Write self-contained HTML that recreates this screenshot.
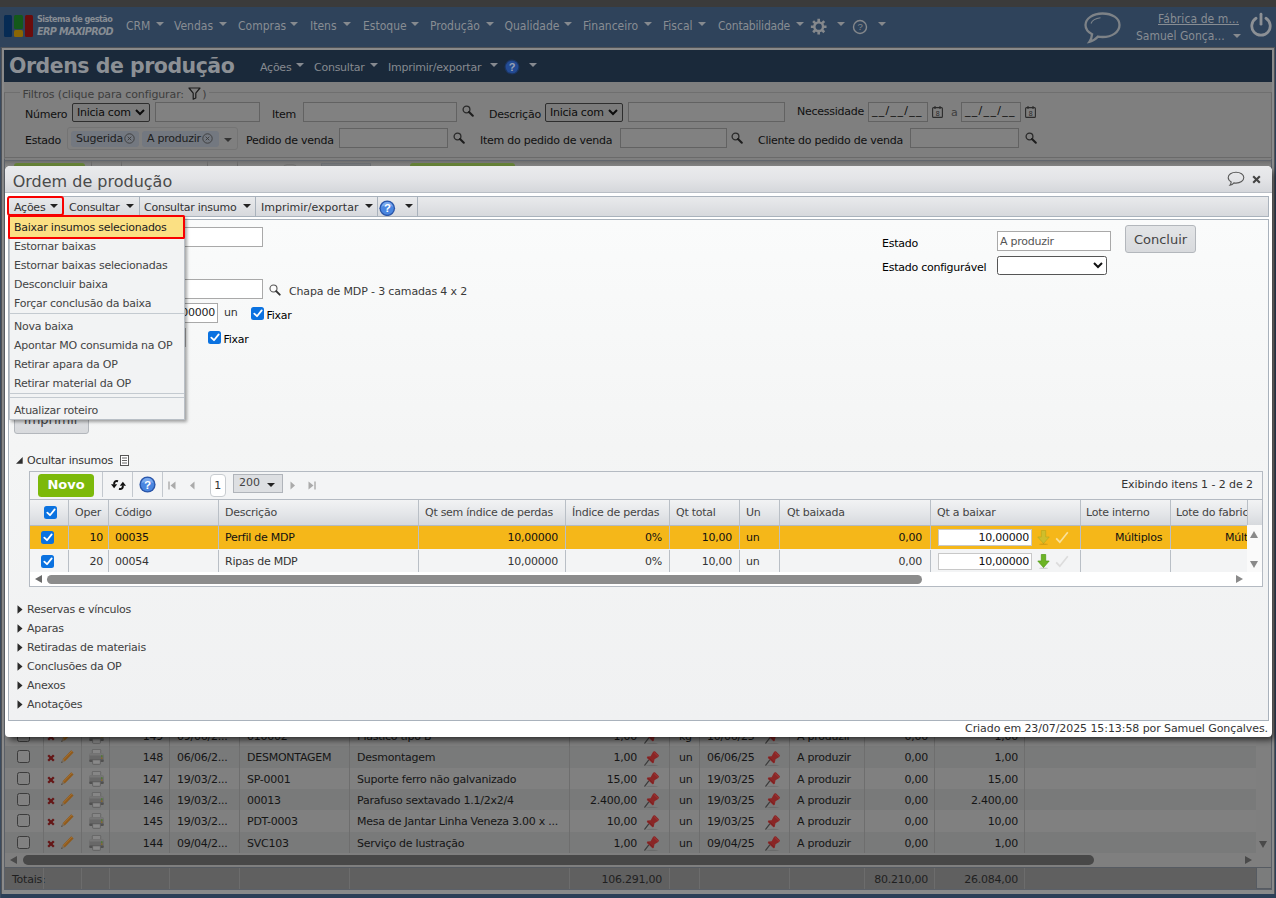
<!DOCTYPE html>
<html lang="pt-BR">
<head>
<meta charset="utf-8">
<title>Ordens de produção</title>
<style>
*{box-sizing:border-box;margin:0;padding:0}
html,body{width:1276px;height:898px;overflow:hidden}
body{position:relative;background:#7f7f7f;font-family:"DejaVu Sans","Liberation Sans",sans-serif;font-size:11px;color:#1a1a1a;letter-spacing:-0.250px}
.a{position:absolute;white-space:nowrap}
.t{position:absolute;white-space:nowrap;line-height:14px;height:14px}
.r{text-align:right}
/* ---------- dimmed page behind ---------- */
#strip{left:0;top:0;width:1276px;height:7px;background:#3b3b3b}
#nav{left:0;top:7px;width:1276px;height:40px;background:#2f435b}
#nav .t{font-family:"DejaVu Sans Condensed","Liberation Sans",sans-serif;font-size:12px;color:#888d93;letter-spacing:0;top:12px}
.nar{position:absolute;width:0;height:0;border-left:4px solid transparent;border-right:4px solid transparent;border-top:5px solid #868a8f;top:16px}
#frame{left:0;top:47px;width:1276px;height:851px;background:#7f7f7f}
#tbar{left:4px;top:50px;width:1268px;height:32px;background:#1a293a}
#tbar .t{color:#868a90;top:10.500px}
.tar{position:absolute;width:0;height:0;border-left:4.500px solid transparent;border-right:4.500px solid transparent;border-top:5px solid #868a90;top:14px}

.nar{top:14.500px;border-top-width:4.500px;border-left-width:4.500px;border-right-width:4.500px}
.tar{top:13px;border-top-width:4.5px}
/* filters */
#filt{left:4px;top:92px;width:1268px;height:66px;border:1px solid #6a6a6a;border-top-color:#6f6f6f}
#leg{left:20px;top:86.500px;background:#7f7f7f;padding:0 3px 0 2.500px;color:#3d3d3d;height:15px;line-height:15px;font-size:11px;letter-spacing:-0.120px}
.fl{color:#101010}
.fi{position:absolute;height:19.500px;border:1px solid #626262;background:#818181}
.fs{position:absolute;height:19px;border:1px solid #2e2e2e;border-radius:2px;background:#7b7b7b;color:#0c0c0c;line-height:17px;padding-left:4px}
.chip{position:absolute;top:3px;height:16px;line-height:15px;background:#737880;border-radius:3px;color:#1d1d1d;padding-left:5px}

/* background grid */
#bg{left:4px;top:158px;width:1268px;height:732px;border:1px solid #5b6068;border-top-color:#7f7f7f;background:#7f7f7f;overflow:hidden}
.brow{position:absolute;left:0;width:1251px;height:21.330px}
.brow span,.bfoot span{position:absolute;top:5px;line-height:14px;color:#151515;white-space:nowrap}
.bsep{position:absolute;top:560px;width:1px;height:134px;background:#6e6e6e}
.bfoot{position:absolute;left:0;top:708px;width:1251px;height:22px;background:#606060;border-top:1px solid #565b62}
.bfoot span{color:#1f1f1f;top:4.500px}
.cb{position:absolute;left:12px;top:4px;width:13px;height:13px;border:1px solid #3c3c3c;border-radius:2.500px;background:#818181}

/* modal */
#modal{left:5px;top:166px;width:1267px;height:571px;background:#fff;border-radius:5px 5px 4px 4px;box-shadow:3px 4px 6px -1px rgba(0,0,0,.65);color:#333}
#mhead{left:0;top:0;width:1267px;height:26.500px;border-radius:5px 5px 0 0;background:linear-gradient(#eaebed,#e3e4e7 50%,#d5d7db);border-bottom:1px solid #b9bec5}
#mtool{left:3px;top:30px;width:1261px;height:21px;border:1px solid #a9b2bc;background:linear-gradient(#e9eaec,#d7d9dd)}
#mtool .t{top:3.500px;color:#333}
.mar{position:absolute;top:6.500px;width:0;height:0;border-left:4px solid transparent;border-right:4px solid transparent;border-top:4.500px solid #222}
.msep{position:absolute;top:0;width:1px;height:19px;background:#a9b2bc}
#mbody{left:3px;top:53px;width:1261px;height:502px;border:1px solid #a9b2bc;background:linear-gradient(#fafbfb,#f4f5f5 45%,#f0f1f2)}
.inp{position:absolute;height:19px;border:1px solid #a9a9a9;background:#fff}

.chk{position:absolute;width:13px;height:13px;border-radius:2.500px;background:#0b72e0}
.chk svg{position:absolute;left:1.500px;top:2px}
.btn{position:absolute;border:1px solid #b3b7bc;border-radius:3px;background:linear-gradient(#e3e5e7,#d8dadd);color:#444;font-size:13px;text-align:center;letter-spacing:0}
/* dropdown menu */
#menu{left:4px;top:50px;width:176px;height:204px;background:#f2f3f4;border:1px solid #b9bfc6;box-shadow:2px 2px 3px rgba(0,0,0,.35)}
#menu .t{left:4px;color:#444}
#menu hr{position:absolute;left:0;width:174px;height:1px;border:0;background:#c4cad0}

/* inner grid (coords relative to modal) */
#grid{left:24px;top:305px;width:1234px;height:116px;border:1px solid #b4bac2;background:#fff;overflow:hidden}
#gtool{left:0;top:0;width:1232px;height:27px;background:#f3f4f5}
#ghead{left:0;top:27px;width:1232px;height:27px;background:linear-gradient(#f2f3f4,#e4e6e9 55%,#d6d9dd);border-top:1px solid #b4bac2;border-bottom:1px solid #b4bac2}
#ghead .t{top:5.500px;color:#444}
.gr{position:absolute;left:0;width:1217px;height:24px}
.gr .t{top:4.500px}
.vs{position:absolute;top:0;width:1px;height:100%;background:#b9bfc6}
.ts{position:absolute;top:0;width:1px;height:25px;background:#c3c8ce}
</style>
</head>
<body>
<!-- ======= dimmed background page ======= -->
<div class="a" id="frame"></div>
<div class="a" id="strip"></div>
<div class="a" id="nav">
  <span class="t" style="left:126px">CRM</span><i class="nar" style="left:155.500px"></i>
  <span class="t" style="left:174px">Vendas</span><i class="nar" style="left:218.500px"></i>
  <span class="t" style="left:238px">Compras</span><i class="nar" style="left:290px"></i>
  <span class="t" style="left:310px">Itens</span><i class="nar" style="left:343px"></i>
  <span class="t" style="left:363px">Estoque</span><i class="nar" style="left:411px"></i>
  <span class="t" style="left:430px">Produção</span><i class="nar" style="left:486px"></i>
  <span class="t" style="left:504.500px">Qualidade</span><i class="nar" style="left:563.500px"></i>
  <span class="t" style="left:583px">Financeiro</span><i class="nar" style="left:644px"></i>
  <span class="t" style="left:663px">Fiscal</span><i class="nar" style="left:698px"></i>
  <span class="t" style="left:718px;letter-spacing:-0.200px">Contabilidade</span><i class="nar" style="left:796px"></i>
  <!-- logo -->
  <div class="a" style="left:4px;top:8px;width:8px;height:22px;background:#062b54;border-radius:1.5px"></div>
  <div class="a" style="left:14px;top:8px;width:9px;height:14px;background:#14591a;border-radius:1.5px"></div>
  <div class="a" style="left:14px;top:23px;width:9px;height:7px;background:#8a6604;border-radius:1.5px"></div>
  <div class="a" style="left:25px;top:8px;width:8px;height:22px;background:#6b0c0c;border-radius:1.5px"></div>
  <span class="t" style="left:37px;top:5px;font-size:9px;font-weight:700;letter-spacing:-0.55px">Sistema de gestão</span>
  <span class="t" style="left:37px;top:18px;font-size:10.800px;font-style:italic;font-weight:700;letter-spacing:-0.650px;color:#868c93">ERP MAXIPROD</span>
  <!-- gear -->
  <svg class="a" style="left:810.300px;top:11.300px" width="17.400" height="17.400" viewBox="0 0 20 20"><g fill="none" stroke="#85888c" stroke-width="3" stroke-linecap="butt"><path d="M10 1v4M10 15v4M1 10h4M15 10h4M3.600 3.600l2.900 2.900M13.500 13.500l2.900 2.900M3.600 16.400l2.900-2.900M13.500 6.500l2.900-2.900"/></g><circle cx="10" cy="10" r="5" fill="none" stroke="#85888c" stroke-width="2.800"/></svg>
  <i class="nar" style="left:837px;border-top-color:#85888c"></i>
  <!-- help -->
  <svg class="a" style="left:852px;top:12px" width="16" height="16" viewBox="0 0 16 16"><circle cx="8" cy="8" r="6.500" fill="none" stroke="#85888c" stroke-width="1.400"/><text x="8" y="11.300" text-anchor="middle" font-family="Liberation Sans, sans-serif" font-size="9.500" fill="#85888c">?</text></svg>
  <i class="nar" style="left:878px;border-top-color:#85888c"></i>
  <!-- chat bubble -->
  <svg class="a" style="left:1083px;top:3.500px" width="40" height="34" viewBox="0 0 40 34"><path d="M19.5 2.5C9.8 2.5 2.5 7.6 2.5 14c0 3.8 2.6 7.1 6.6 9.2-.2 2.8-1.3 5.6-2.7 7.6 3.6-.8 6.6-2.8 8.6-5.2 1.4.3 2.9.4 4.5.4 9.700 0 17-5.100 17-12S29.200 2.500 19.500 2.500z" fill="none" stroke="#7d8287" stroke-width="2.300"/><path d="M8 12.500c1.200-3.200 5-5.300 9.500-5.800" fill="none" stroke="#7d838a" stroke-width="1.100"/></svg>
  <span class="t" style="left:1158px;top:5px;text-decoration:underline;letter-spacing:0.080px">Fábrica de m...</span>
  <span class="t" style="left:1136px;top:22px">Samuel Gonça...</span><i class="nar" style="left:1233px;top:27px"></i>
  <!-- power -->
  <svg class="a" style="left:1249px;top:5px" width="24" height="25" viewBox="0 0 24 25"><path d="M7 6.300A9.200 9.200 0 1 0 17 6.300" fill="none" stroke="#8c9095" stroke-width="2.800" stroke-linecap="round"/><path d="M12 2.200v10" stroke="#8c9095" stroke-width="2.800" stroke-linecap="round"/></svg>
</div>
<div class="a" style="left:1px;top:47px;width:1274px;height:847px;border:1px solid #505358;border-bottom:0"></div><div class="a" style="left:2px;top:48px;width:1272px;height:846px;border:2px solid #8a8a8a;border-bottom-width:4px"></div>
<div class="a" id="tbar">
  <span class="t" style="left:5px;top:1px;height:30px;line-height:30px;font-size:20.500px;font-weight:700;color:#8c9095;letter-spacing:-0.480px">Ordens de produção</span>
  <span class="t" style="left:256px">Ações</span><i class="tar" style="left:292px"></i>
  <span class="t" style="left:310px">Consultar</span><i class="tar" style="left:366px"></i>
  <span class="t" style="left:384px">Imprimir/exportar</span><i class="tar" style="left:486px"></i>
  <svg class="a" style="left:499.500px;top:9px" width="16" height="16" viewBox="0 0 16 16"><circle cx="8" cy="8" r="7.500" fill="#1c3560"/><circle cx="8" cy="8" r="6.300" fill="#234b94"/><text x="8" y="12" text-anchor="middle" font-family="Liberation Sans, sans-serif" font-weight="700" font-size="11" fill="#9aa3b5">?</text></svg>
  <i class="tar" style="left:525px"></i>
</div>
<div class="a" id="filt"></div>
<div class="a" id="leg">Filtros (clique para configurar: <svg style="vertical-align:-2px;margin:0 1px" width="13" height="13" viewBox="0 0 13 13"><path d="M1 1h11L7.800 6.200V11L5.200 12.200V6.200z" fill="none" stroke="#1c1c1c" stroke-width="1.200" stroke-linejoin="round"/></svg>)</div>
<span class="t fl" style="left:25px;top:108px">Número</span>
<div class="fs" style="left:72px;top:103px;width:78px">Inicia com<svg class="a" style="right:4px;top:5px" width="10" height="7" viewBox="0 0 10 7"><path d="M1 1l4 4 4-4" fill="none" stroke="#0c0c0c" stroke-width="2"/></svg></div>
<div class="fi" style="left:155px;top:102.200px;width:105px"></div>
<span class="t fl" style="left:272px;top:108px">Item</span>
<div class="fi" style="left:303px;top:102.200px;width:154px"></div><svg class="a" style="left:462px;top:105px" width="12" height="12" viewBox="0 0 12 12"><circle cx="4.500" cy="4.500" r="3.400" fill="none" stroke="#2a2a2a" stroke-width="1.300"/><path d="M7 7l3.800 3.800" stroke="#1d1d1d" stroke-width="2" stroke-linecap="round"/></svg>
<span class="t fl" style="left:489px;top:108px">Descrição</span>
<div class="fs" style="left:545px;top:103px;width:78px">Inicia com<svg class="a" style="right:4px;top:5px" width="10" height="7" viewBox="0 0 10 7"><path d="M1 1l4 4 4-4" fill="none" stroke="#0c0c0c" stroke-width="2"/></svg></div>
<div class="fi" style="left:628px;top:102.200px;width:157px"></div>
<span class="t fl" style="left:797px;top:104.500px">Necessidade</span>
<div class="fi" style="left:868px;top:102.200px;width:60px;line-height:16px;padding-left:3px;color:#0c0c0c;letter-spacing:1.300px">__/__/__</div><svg class="a" style="left:932px;top:106px" width="11" height="12" viewBox="0 0 11 12"><rect x="0.600" y="1.600" width="9.800" height="9.800" rx="1" fill="none" stroke="#2c2c2c" stroke-width="1.100"/><path d="M3 0v3M8 0v3" stroke="#2c2c2c" stroke-width="1.100"/><text x="5.500" y="10" text-anchor="middle" font-size="7" font-family="Liberation Sans, sans-serif" fill="#2c2c2c">8</text></svg>
<span class="t" style="left:951px;top:105.500px;color:#3d3d3d">a</span>
<div class="fi" style="left:961px;top:102.200px;width:60px;line-height:16px;padding-left:3px;color:#0c0c0c;letter-spacing:1.300px">__/__/__</div><svg class="a" style="left:1025px;top:106px" width="11" height="12" viewBox="0 0 11 12"><rect x="0.600" y="1.600" width="9.800" height="9.800" rx="1" fill="none" stroke="#2c2c2c" stroke-width="1.100"/><path d="M3 0v3M8 0v3" stroke="#2c2c2c" stroke-width="1.100"/><text x="5.500" y="10" text-anchor="middle" font-size="7" font-family="Liberation Sans, sans-serif" fill="#2c2c2c">8</text></svg>
<span class="t fl" style="left:25px;top:134px">Estado</span>
<div class="a" style="left:67px;top:127px;width:171px;height:23px;border:1px solid #747474;border-radius:3px">
  <div class="chip" style="left:3px;width:68px">Sugerida<svg style="vertical-align:-2px;margin-left:1px" width="11" height="11" viewBox="0 0 11 11"><circle cx="5.500" cy="5.500" r="4.700" fill="none" stroke="#3a3a3a" stroke-width="0.900"/><path d="M3.700 3.700l3.600 3.600M7.300 3.700l-3.600 3.600" stroke="#3a3a3a" stroke-width="0.900"/></svg></div>
  <div class="chip" style="left:74px;width:77px">A produzir<svg style="vertical-align:-2px;margin-left:1px" width="11" height="11" viewBox="0 0 11 11"><circle cx="5.500" cy="5.500" r="4.700" fill="none" stroke="#3a3a3a" stroke-width="0.900"/><path d="M3.700 3.700l3.600 3.600M7.300 3.700l-3.600 3.600" stroke="#3a3a3a" stroke-width="0.900"/></svg></div>
  <i class="a" style="left:156px;top:10px;width:0;height:0;border-left:4px solid transparent;border-right:4px solid transparent;border-top:4px solid #333"></i>
</div>
<span class="t fl" style="left:246px;top:134px">Pedido de venda</span>
<div class="fi" style="left:339px;top:128px;width:109px"></div><svg class="a" style="left:453px;top:132px" width="12" height="12" viewBox="0 0 12 12"><circle cx="4.500" cy="4.500" r="3.400" fill="none" stroke="#2a2a2a" stroke-width="1.300"/><path d="M7 7l3.800 3.800" stroke="#1d1d1d" stroke-width="2" stroke-linecap="round"/></svg>
<span class="t fl" style="left:480px;top:134px">Item do pedido de venda</span>
<div class="fi" style="left:620px;top:128px;width:107px"></div><svg class="a" style="left:731px;top:132px" width="12" height="12" viewBox="0 0 12 12"><circle cx="4.500" cy="4.500" r="3.400" fill="none" stroke="#2a2a2a" stroke-width="1.300"/><path d="M7 7l3.800 3.800" stroke="#1d1d1d" stroke-width="2" stroke-linecap="round"/></svg>
<span class="t fl" style="left:758px;top:134px">Cliente do pedido de venda</span>
<div class="fi" style="left:909.500px;top:128px;width:109px"></div><svg class="a" style="left:1025px;top:132px" width="12" height="12" viewBox="0 0 12 12"><circle cx="4.500" cy="4.500" r="3.400" fill="none" stroke="#2a2a2a" stroke-width="1.300"/><path d="M7 7l3.800 3.800" stroke="#1d1d1d" stroke-width="2" stroke-linecap="round"/></svg>
<div class="a" id="bg">
<div class="a" style="left:0;top:1.500px;width:1266px;height:8px;background:linear-gradient(#6e6e6e,#8c8c8c 6px,#8c8c8c)"></div><i class="a" style="left:0;top:0.500px;width:1266px;height:1px;background:#62666d"></i><i class="a" style="left:86px;top:2px;width:1px;height:10px;background:#6c6c6c"></i><i class="a" style="left:116px;top:2px;width:1px;height:10px;background:#6c6c6c"></i><i class="a" style="left:202px;top:2px;width:1px;height:10px;background:#6c6c6c"></i><i class="a" style="left:232px;top:2px;width:1px;height:10px;background:#6c6c6c"></i><i class="a" style="left:278px;top:4.500px;width:14px;height:20px;border:1px solid #737373;border-radius:4px;background:#808080"></i><i class="a" style="left:316px;top:4px;width:50px;height:19px;border:1px solid #6c6f73;background:#76787b"></i>
<div class="a" style="left:9px;top:4px;width:71px;height:20px;background:#668238;border-radius:3px"></div>
<div class="a" style="left:405px;top:4px;width:105px;height:20px;background:#668238;border-radius:3px"></div>
<div class="brow" style="top:565.9699999999999px;background:#808080"><i class="cb"></i><svg style="position:absolute;left:42px;top:8px" width="8" height="8" viewBox="0 0 8 8"><path d="M1.200 1.200l5.600 5.600M6.800 1.200l-5.600 5.600" stroke="#641616" stroke-width="2.300"/></svg><svg style="position:absolute;left:55px;top:3px" width="15" height="15" viewBox="0 0 15 15"><path d="M2.600 10.200L11.300 1.200l2.300 2.300L4.800 12.400z" fill="#8f5a1c"/><path d="M3.400 10.900L12 2" stroke="#a87432" stroke-width="0.800"/><path d="M2.600 10.200l2.200 2.200L1.300 13.700z" fill="#7a6a55"/><path d="M1.300 13.700l.500-1.300.800.800z" fill="#1c1c1c"/></svg><svg style="position:absolute;left:83.500px;top:3px" width="15" height="16" viewBox="0 0 15 16"><rect x="3.300" y="0.400" width="8.400" height="5.500" rx="0.800" fill="#868686" stroke="#5f5f5f" stroke-width="0.800"/><rect x="0.300" y="4.300" width="14.400" height="8.700" rx="1.600" fill="#686868"/><rect x="0.300" y="4.300" width="14.400" height="2.200" rx="1" fill="#767676"/><rect x="0.300" y="10.500" width="14.400" height="2.500" rx="1" fill="#515151"/><rect x="3.600" y="10.800" width="7.800" height="4.500" rx="0.800" fill="#898989" stroke="#5a5a5a" stroke-width="0.800"/><rect x="12" y="6.300" width="1.500" height="1.500" fill="#4e7d2c"/><rect x="12" y="8.500" width="1.500" height="1.300" fill="#8a6a1c"/></svg>
<span class="r" style="right:1093px">149</span><span style="left:172px">09/06/2...</span><span style="left:242px">010002</span><span style="left:352px">Plástico tipo B</span><span class="r" style="right:619px">1,00</span><svg style="position:absolute;left:639.200px;top:4.400px" width="16" height="16" viewBox="0 0 16 16"><ellipse cx="8" cy="14.300" rx="6.500" ry="0.600" fill="#000" opacity=".12"/><path d="M4.600 9.200L0.800 14.200" stroke="#3c3c3c" stroke-width="1.200" stroke-linecap="round"/><path d="M9.100 0.800Q10 0 10.900 0.300L14.900 4.300Q15 5.200 14.200 5.900L10.500 8.300L9.800 11.800Q9.300 12.400 8.500 12.200L2.900 6.900Q2.800 6 3.400 5.500L6.600 5.300z" fill="#8a2626"/><path d="M9.800 1.300L14 5.300" stroke="#a03a3a" stroke-width="0.900"/><path d="M4 6.300l5 4.800" stroke="#762020" stroke-width="0.900"/></svg><span style="left:674px">kg</span><span style="left:702px">10/06/25</span><svg style="position:absolute;left:759.500px;top:4.400px" width="16" height="16" viewBox="0 0 16 16"><ellipse cx="8" cy="14.300" rx="6.500" ry="0.600" fill="#000" opacity=".12"/><path d="M4.600 9.200L0.800 14.200" stroke="#3c3c3c" stroke-width="1.200" stroke-linecap="round"/><path d="M9.100 0.800Q10 0 10.900 0.300L14.900 4.300Q15 5.200 14.200 5.900L10.500 8.300L9.800 11.800Q9.300 12.400 8.500 12.200L2.900 6.900Q2.800 6 3.400 5.500L6.600 5.300z" fill="#8a2626"/><path d="M9.800 1.300L14 5.300" stroke="#a03a3a" stroke-width="0.900"/><path d="M4 6.300l5 4.800" stroke="#762020" stroke-width="0.900"/></svg><span style="left:792px">A produzir</span><span class="r" style="right:328px">0,00</span><span class="r" style="right:238px">1,00</span></div>
<div class="brow" style="top:587.3px;background:#797a7a"><i class="cb"></i><svg style="position:absolute;left:42px;top:8px" width="8" height="8" viewBox="0 0 8 8"><path d="M1.200 1.200l5.600 5.600M6.800 1.200l-5.600 5.600" stroke="#641616" stroke-width="2.300"/></svg><svg style="position:absolute;left:55px;top:3px" width="15" height="15" viewBox="0 0 15 15"><path d="M2.600 10.200L11.300 1.200l2.300 2.300L4.800 12.400z" fill="#8f5a1c"/><path d="M3.400 10.900L12 2" stroke="#a87432" stroke-width="0.800"/><path d="M2.600 10.200l2.200 2.200L1.300 13.700z" fill="#7a6a55"/><path d="M1.300 13.700l.500-1.300.800.800z" fill="#1c1c1c"/></svg><svg style="position:absolute;left:83.500px;top:3px" width="15" height="16" viewBox="0 0 15 16"><rect x="3.300" y="0.400" width="8.400" height="5.500" rx="0.800" fill="#868686" stroke="#5f5f5f" stroke-width="0.800"/><rect x="0.300" y="4.300" width="14.400" height="8.700" rx="1.600" fill="#686868"/><rect x="0.300" y="4.300" width="14.400" height="2.200" rx="1" fill="#767676"/><rect x="0.300" y="10.500" width="14.400" height="2.500" rx="1" fill="#515151"/><rect x="3.600" y="10.800" width="7.800" height="4.500" rx="0.800" fill="#898989" stroke="#5a5a5a" stroke-width="0.800"/><rect x="12" y="6.300" width="1.500" height="1.500" fill="#4e7d2c"/><rect x="12" y="8.500" width="1.500" height="1.300" fill="#8a6a1c"/></svg>
<span class="r" style="right:1093px">148</span><span style="left:172px">06/06/2...</span><span style="left:242px">DESMONTAGEM</span><span style="left:352px">Desmontagem</span><span class="r" style="right:619px">1,00</span><svg style="position:absolute;left:639.200px;top:4.400px" width="16" height="16" viewBox="0 0 16 16"><ellipse cx="8" cy="14.300" rx="6.500" ry="0.600" fill="#000" opacity=".12"/><path d="M4.600 9.200L0.800 14.200" stroke="#3c3c3c" stroke-width="1.200" stroke-linecap="round"/><path d="M9.100 0.800Q10 0 10.900 0.300L14.900 4.300Q15 5.200 14.200 5.900L10.500 8.300L9.800 11.800Q9.300 12.400 8.500 12.200L2.900 6.900Q2.800 6 3.400 5.500L6.600 5.300z" fill="#8a2626"/><path d="M9.800 1.300L14 5.300" stroke="#a03a3a" stroke-width="0.900"/><path d="M4 6.300l5 4.800" stroke="#762020" stroke-width="0.900"/></svg><span style="left:674px">un</span><span style="left:702px">06/06/25</span><svg style="position:absolute;left:759.500px;top:4.400px" width="16" height="16" viewBox="0 0 16 16"><ellipse cx="8" cy="14.300" rx="6.500" ry="0.600" fill="#000" opacity=".12"/><path d="M4.600 9.200L0.800 14.200" stroke="#3c3c3c" stroke-width="1.200" stroke-linecap="round"/><path d="M9.100 0.800Q10 0 10.900 0.300L14.900 4.300Q15 5.200 14.200 5.900L10.500 8.300L9.800 11.800Q9.300 12.400 8.500 12.200L2.900 6.900Q2.800 6 3.400 5.500L6.600 5.300z" fill="#8a2626"/><path d="M9.800 1.300L14 5.300" stroke="#a03a3a" stroke-width="0.900"/><path d="M4 6.300l5 4.800" stroke="#762020" stroke-width="0.900"/></svg><span style="left:792px">A produzir</span><span class="r" style="right:328px">0,00</span><span class="r" style="right:238px">1,00</span></div>
<div class="brow" style="top:608.63px;background:#808080"><i class="cb"></i><svg style="position:absolute;left:42px;top:8px" width="8" height="8" viewBox="0 0 8 8"><path d="M1.200 1.200l5.600 5.600M6.800 1.200l-5.600 5.600" stroke="#641616" stroke-width="2.300"/></svg><svg style="position:absolute;left:55px;top:3px" width="15" height="15" viewBox="0 0 15 15"><path d="M2.600 10.200L11.300 1.200l2.300 2.300L4.800 12.400z" fill="#8f5a1c"/><path d="M3.400 10.900L12 2" stroke="#a87432" stroke-width="0.800"/><path d="M2.600 10.200l2.200 2.200L1.300 13.700z" fill="#7a6a55"/><path d="M1.300 13.700l.500-1.300.800.800z" fill="#1c1c1c"/></svg><svg style="position:absolute;left:83.500px;top:3px" width="15" height="16" viewBox="0 0 15 16"><rect x="3.300" y="0.400" width="8.400" height="5.500" rx="0.800" fill="#868686" stroke="#5f5f5f" stroke-width="0.800"/><rect x="0.300" y="4.300" width="14.400" height="8.700" rx="1.600" fill="#686868"/><rect x="0.300" y="4.300" width="14.400" height="2.200" rx="1" fill="#767676"/><rect x="0.300" y="10.500" width="14.400" height="2.500" rx="1" fill="#515151"/><rect x="3.600" y="10.800" width="7.800" height="4.500" rx="0.800" fill="#898989" stroke="#5a5a5a" stroke-width="0.800"/><rect x="12" y="6.300" width="1.500" height="1.500" fill="#4e7d2c"/><rect x="12" y="8.500" width="1.500" height="1.300" fill="#8a6a1c"/></svg>
<span class="r" style="right:1093px">147</span><span style="left:172px">19/03/2...</span><span style="left:242px">SP-0001</span><span style="left:352px">Suporte ferro não galvanizado</span><span class="r" style="right:619px">15,00</span><svg style="position:absolute;left:639.200px;top:4.400px" width="16" height="16" viewBox="0 0 16 16"><ellipse cx="8" cy="14.300" rx="6.500" ry="0.600" fill="#000" opacity=".12"/><path d="M4.600 9.200L0.800 14.200" stroke="#3c3c3c" stroke-width="1.200" stroke-linecap="round"/><path d="M9.100 0.800Q10 0 10.900 0.300L14.900 4.300Q15 5.200 14.200 5.900L10.500 8.300L9.800 11.800Q9.300 12.400 8.500 12.200L2.900 6.900Q2.800 6 3.400 5.500L6.600 5.300z" fill="#8a2626"/><path d="M9.800 1.300L14 5.300" stroke="#a03a3a" stroke-width="0.900"/><path d="M4 6.300l5 4.800" stroke="#762020" stroke-width="0.900"/></svg><span style="left:674px">un</span><span style="left:702px">19/03/25</span><svg style="position:absolute;left:759.500px;top:4.400px" width="16" height="16" viewBox="0 0 16 16"><ellipse cx="8" cy="14.300" rx="6.500" ry="0.600" fill="#000" opacity=".12"/><path d="M4.600 9.200L0.800 14.200" stroke="#3c3c3c" stroke-width="1.200" stroke-linecap="round"/><path d="M9.100 0.800Q10 0 10.900 0.300L14.900 4.300Q15 5.200 14.200 5.900L10.500 8.300L9.800 11.800Q9.300 12.400 8.500 12.200L2.900 6.900Q2.800 6 3.400 5.500L6.600 5.300z" fill="#8a2626"/><path d="M9.800 1.300L14 5.300" stroke="#a03a3a" stroke-width="0.900"/><path d="M4 6.300l5 4.800" stroke="#762020" stroke-width="0.900"/></svg><span style="left:792px">A produzir</span><span class="r" style="right:328px">0,00</span><span class="r" style="right:238px">15,00</span></div>
<div class="brow" style="top:629.96px;background:#797a7a"><i class="cb"></i><svg style="position:absolute;left:42px;top:8px" width="8" height="8" viewBox="0 0 8 8"><path d="M1.200 1.200l5.600 5.600M6.800 1.200l-5.600 5.600" stroke="#641616" stroke-width="2.300"/></svg><svg style="position:absolute;left:55px;top:3px" width="15" height="15" viewBox="0 0 15 15"><path d="M2.600 10.200L11.300 1.200l2.300 2.300L4.800 12.400z" fill="#8f5a1c"/><path d="M3.400 10.900L12 2" stroke="#a87432" stroke-width="0.800"/><path d="M2.600 10.200l2.200 2.200L1.300 13.700z" fill="#7a6a55"/><path d="M1.300 13.700l.500-1.300.800.800z" fill="#1c1c1c"/></svg><svg style="position:absolute;left:83.500px;top:3px" width="15" height="16" viewBox="0 0 15 16"><rect x="3.300" y="0.400" width="8.400" height="5.500" rx="0.800" fill="#868686" stroke="#5f5f5f" stroke-width="0.800"/><rect x="0.300" y="4.300" width="14.400" height="8.700" rx="1.600" fill="#686868"/><rect x="0.300" y="4.300" width="14.400" height="2.200" rx="1" fill="#767676"/><rect x="0.300" y="10.500" width="14.400" height="2.500" rx="1" fill="#515151"/><rect x="3.600" y="10.800" width="7.800" height="4.500" rx="0.800" fill="#898989" stroke="#5a5a5a" stroke-width="0.800"/><rect x="12" y="6.300" width="1.500" height="1.500" fill="#4e7d2c"/><rect x="12" y="8.500" width="1.500" height="1.300" fill="#8a6a1c"/></svg>
<span class="r" style="right:1093px">146</span><span style="left:172px">19/03/2...</span><span style="left:242px">00013</span><span style="left:352px">Parafuso sextavado 1.1/2x2/4</span><span class="r" style="right:619px">2.400,00</span><svg style="position:absolute;left:639.200px;top:4.400px" width="16" height="16" viewBox="0 0 16 16"><ellipse cx="8" cy="14.300" rx="6.500" ry="0.600" fill="#000" opacity=".12"/><path d="M4.600 9.200L0.800 14.200" stroke="#3c3c3c" stroke-width="1.200" stroke-linecap="round"/><path d="M9.100 0.800Q10 0 10.900 0.300L14.900 4.300Q15 5.200 14.200 5.900L10.500 8.300L9.800 11.800Q9.300 12.400 8.500 12.200L2.900 6.900Q2.800 6 3.400 5.500L6.600 5.300z" fill="#8a2626"/><path d="M9.800 1.300L14 5.300" stroke="#a03a3a" stroke-width="0.900"/><path d="M4 6.300l5 4.800" stroke="#762020" stroke-width="0.900"/></svg><span style="left:674px">un</span><span style="left:702px">19/03/25</span><svg style="position:absolute;left:759.500px;top:4.400px" width="16" height="16" viewBox="0 0 16 16"><ellipse cx="8" cy="14.300" rx="6.500" ry="0.600" fill="#000" opacity=".12"/><path d="M4.600 9.200L0.800 14.200" stroke="#3c3c3c" stroke-width="1.200" stroke-linecap="round"/><path d="M9.100 0.800Q10 0 10.900 0.300L14.900 4.300Q15 5.200 14.200 5.900L10.500 8.300L9.800 11.800Q9.300 12.400 8.500 12.200L2.900 6.900Q2.800 6 3.400 5.500L6.600 5.300z" fill="#8a2626"/><path d="M9.800 1.300L14 5.300" stroke="#a03a3a" stroke-width="0.900"/><path d="M4 6.300l5 4.800" stroke="#762020" stroke-width="0.900"/></svg><span style="left:792px">A produzir</span><span class="r" style="right:328px">0,00</span><span class="r" style="right:238px">2.400,00</span></div>
<div class="brow" style="top:651.29px;background:#808080"><i class="cb"></i><svg style="position:absolute;left:42px;top:8px" width="8" height="8" viewBox="0 0 8 8"><path d="M1.200 1.200l5.600 5.600M6.800 1.200l-5.600 5.600" stroke="#641616" stroke-width="2.300"/></svg><svg style="position:absolute;left:55px;top:3px" width="15" height="15" viewBox="0 0 15 15"><path d="M2.600 10.200L11.300 1.200l2.300 2.300L4.800 12.400z" fill="#8f5a1c"/><path d="M3.400 10.900L12 2" stroke="#a87432" stroke-width="0.800"/><path d="M2.600 10.200l2.200 2.200L1.300 13.700z" fill="#7a6a55"/><path d="M1.300 13.700l.500-1.300.800.800z" fill="#1c1c1c"/></svg><svg style="position:absolute;left:83.500px;top:3px" width="15" height="16" viewBox="0 0 15 16"><rect x="3.300" y="0.400" width="8.400" height="5.500" rx="0.800" fill="#868686" stroke="#5f5f5f" stroke-width="0.800"/><rect x="0.300" y="4.300" width="14.400" height="8.700" rx="1.600" fill="#686868"/><rect x="0.300" y="4.300" width="14.400" height="2.200" rx="1" fill="#767676"/><rect x="0.300" y="10.500" width="14.400" height="2.500" rx="1" fill="#515151"/><rect x="3.600" y="10.800" width="7.800" height="4.500" rx="0.800" fill="#898989" stroke="#5a5a5a" stroke-width="0.800"/><rect x="12" y="6.300" width="1.500" height="1.500" fill="#4e7d2c"/><rect x="12" y="8.500" width="1.500" height="1.300" fill="#8a6a1c"/></svg>
<span class="r" style="right:1093px">145</span><span style="left:172px">19/03/2...</span><span style="left:242px">PDT-0003</span><span style="left:352px">Mesa de Jantar Linha Veneza 3.00 x ...</span><span class="r" style="right:619px">10,00</span><svg style="position:absolute;left:639.200px;top:4.400px" width="16" height="16" viewBox="0 0 16 16"><ellipse cx="8" cy="14.300" rx="6.500" ry="0.600" fill="#000" opacity=".12"/><path d="M4.600 9.200L0.800 14.200" stroke="#3c3c3c" stroke-width="1.200" stroke-linecap="round"/><path d="M9.100 0.800Q10 0 10.900 0.300L14.900 4.300Q15 5.200 14.200 5.900L10.500 8.300L9.800 11.800Q9.300 12.400 8.500 12.200L2.900 6.900Q2.800 6 3.400 5.500L6.600 5.300z" fill="#8a2626"/><path d="M9.800 1.300L14 5.300" stroke="#a03a3a" stroke-width="0.900"/><path d="M4 6.300l5 4.800" stroke="#762020" stroke-width="0.900"/></svg><span style="left:674px">un</span><span style="left:702px">19/03/25</span><svg style="position:absolute;left:759.500px;top:4.400px" width="16" height="16" viewBox="0 0 16 16"><ellipse cx="8" cy="14.300" rx="6.500" ry="0.600" fill="#000" opacity=".12"/><path d="M4.600 9.200L0.800 14.200" stroke="#3c3c3c" stroke-width="1.200" stroke-linecap="round"/><path d="M9.100 0.800Q10 0 10.900 0.300L14.900 4.300Q15 5.200 14.200 5.900L10.500 8.300L9.800 11.800Q9.300 12.400 8.500 12.200L2.900 6.900Q2.800 6 3.400 5.500L6.600 5.300z" fill="#8a2626"/><path d="M9.800 1.300L14 5.300" stroke="#a03a3a" stroke-width="0.900"/><path d="M4 6.300l5 4.800" stroke="#762020" stroke-width="0.900"/></svg><span style="left:792px">A produzir</span><span class="r" style="right:328px">0,00</span><span class="r" style="right:238px">10,00</span></div>
<div class="brow" style="top:672.62px;background:#797a7a"><i class="cb"></i><svg style="position:absolute;left:42px;top:8px" width="8" height="8" viewBox="0 0 8 8"><path d="M1.200 1.200l5.600 5.600M6.800 1.200l-5.600 5.600" stroke="#641616" stroke-width="2.300"/></svg><svg style="position:absolute;left:55px;top:3px" width="15" height="15" viewBox="0 0 15 15"><path d="M2.600 10.200L11.300 1.200l2.300 2.300L4.800 12.400z" fill="#8f5a1c"/><path d="M3.400 10.900L12 2" stroke="#a87432" stroke-width="0.800"/><path d="M2.600 10.200l2.200 2.200L1.300 13.700z" fill="#7a6a55"/><path d="M1.300 13.700l.500-1.300.800.800z" fill="#1c1c1c"/></svg><svg style="position:absolute;left:83.500px;top:3px" width="15" height="16" viewBox="0 0 15 16"><rect x="3.300" y="0.400" width="8.400" height="5.500" rx="0.800" fill="#868686" stroke="#5f5f5f" stroke-width="0.800"/><rect x="0.300" y="4.300" width="14.400" height="8.700" rx="1.600" fill="#686868"/><rect x="0.300" y="4.300" width="14.400" height="2.200" rx="1" fill="#767676"/><rect x="0.300" y="10.500" width="14.400" height="2.500" rx="1" fill="#515151"/><rect x="3.600" y="10.800" width="7.800" height="4.500" rx="0.800" fill="#898989" stroke="#5a5a5a" stroke-width="0.800"/><rect x="12" y="6.300" width="1.500" height="1.500" fill="#4e7d2c"/><rect x="12" y="8.500" width="1.500" height="1.300" fill="#8a6a1c"/></svg>
<span class="r" style="right:1093px">144</span><span style="left:172px">09/04/2...</span><span style="left:242px">SVC103</span><span style="left:352px">Serviço de lustração</span><span class="r" style="right:619px">1,00</span><svg style="position:absolute;left:639.200px;top:4.400px" width="16" height="16" viewBox="0 0 16 16"><ellipse cx="8" cy="14.300" rx="6.500" ry="0.600" fill="#000" opacity=".12"/><path d="M4.600 9.200L0.800 14.200" stroke="#3c3c3c" stroke-width="1.200" stroke-linecap="round"/><path d="M9.100 0.800Q10 0 10.900 0.300L14.900 4.300Q15 5.200 14.200 5.900L10.500 8.300L9.800 11.800Q9.300 12.400 8.500 12.200L2.900 6.900Q2.800 6 3.400 5.500L6.600 5.300z" fill="#8a2626"/><path d="M9.800 1.300L14 5.300" stroke="#a03a3a" stroke-width="0.900"/><path d="M4 6.300l5 4.800" stroke="#762020" stroke-width="0.900"/></svg><span style="left:674px">un</span><span style="left:702px">09/04/25</span><svg style="position:absolute;left:759.500px;top:4.400px" width="16" height="16" viewBox="0 0 16 16"><ellipse cx="8" cy="14.300" rx="6.500" ry="0.600" fill="#000" opacity=".12"/><path d="M4.600 9.200L0.800 14.200" stroke="#3c3c3c" stroke-width="1.200" stroke-linecap="round"/><path d="M9.100 0.800Q10 0 10.900 0.300L14.900 4.300Q15 5.200 14.200 5.900L10.500 8.300L9.800 11.800Q9.300 12.400 8.500 12.200L2.900 6.900Q2.800 6 3.400 5.500L6.600 5.300z" fill="#8a2626"/><path d="M9.800 1.300L14 5.300" stroke="#a03a3a" stroke-width="0.900"/><path d="M4 6.300l5 4.800" stroke="#762020" stroke-width="0.900"/></svg><span style="left:792px">A produzir</span><span class="r" style="right:328px">0,00</span><span class="r" style="right:238px">1,00</span></div>
<i class="bsep" style="left:38px"></i><i class="bsep" style="left:76px"></i><i class="bsep" style="left:104px"></i><i class="bsep" style="left:164px"></i><i class="bsep" style="left:234px"></i><i class="bsep" style="left:344px"></i><i class="bsep" style="left:564px"></i><i class="bsep" style="left:664px"></i><i class="bsep" style="left:694px"></i><i class="bsep" style="left:784px"></i><i class="bsep" style="left:859px"></i><i class="bsep" style="left:929px"></i><i class="bsep" style="left:1019px"></i>
<!-- h scrollbar -->
<div class="a" style="left:0;top:694px;width:1266px;height:15px;background:#7f7f7f"></div>
<i class="a" style="left:5px;top:697px;border-top:4.500px solid transparent;border-bottom:4.500px solid transparent;border-right:7px solid #4a4a4a"></i>
<div class="a" style="left:18px;top:696px;width:1071px;height:10px;border-radius:5px;background:#484848"></div>
<i class="a" style="left:1240px;top:697px;border-top:4.500px solid transparent;border-bottom:4.500px solid transparent;border-left:7px solid #4a4a4a"></i>
<i class="a" style="left:1254px;top:682px;border-left:4.500px solid transparent;border-right:4.500px solid transparent;border-top:7px solid #4a4a4a"></i>
<div class="bfoot"><span style="left:7px">Totais:</span><span class="r" style="right:594px">106.291,00</span><span class="r" style="right:328px">80.210,00</span><span class="r" style="right:238px">26.084,00</span>
<i style="position:absolute;top:0;left:38px;width:1px;height:22px;background:#6c6c6c"></i><i style="position:absolute;top:0;left:76px;width:1px;height:22px;background:#6c6c6c"></i><i style="position:absolute;top:0;left:104px;width:1px;height:22px;background:#6c6c6c"></i><i style="position:absolute;top:0;left:164px;width:1px;height:22px;background:#6c6c6c"></i><i style="position:absolute;top:0;left:234px;width:1px;height:22px;background:#6c6c6c"></i><i style="position:absolute;top:0;left:344px;width:1px;height:22px;background:#6c6c6c"></i><i style="position:absolute;top:0;left:564px;width:1px;height:22px;background:#6c6c6c"></i><i style="position:absolute;top:0;left:664px;width:1px;height:22px;background:#6c6c6c"></i><i style="position:absolute;top:0;left:694px;width:1px;height:22px;background:#6c6c6c"></i><i style="position:absolute;top:0;left:784px;width:1px;height:22px;background:#6c6c6c"></i><i style="position:absolute;top:0;left:859px;width:1px;height:22px;background:#6c6c6c"></i><i style="position:absolute;top:0;left:929px;width:1px;height:22px;background:#6c6c6c"></i><i style="position:absolute;top:0;left:1019px;width:1px;height:22px;background:#6c6c6c"></i>
</div>
<div class="a" style="left:1251px;top:708px;width:15px;height:22px;background:#7b7c7c;border:1px solid #565b62;border-right:0"></div>
</div>
<div class="a" style="left:0;top:894px;width:1276px;height:4px;background:#2c3f57"></div>
<div class="a" style="left:1275px;top:47px;width:1px;height:851px;background:#2c3f57"></div>
<div class="a" style="left:0;top:47px;width:1px;height:851px;background:#3a4a5e"></div>
<!-- ======= modal ======= -->
<div class="a" id="modal">
  <div class="a" id="mhead">
    <span class="t" style="left:7.700px;top:4.500px;height:22px;line-height:22px;font-size:16px;color:#4a4a4a;letter-spacing:0">Ordem de produção</span>
    <svg class="a" style="left:1222px;top:5px" width="18" height="16" viewBox="0 0 18 16"><path d="M9 1.200C4.600 1.200 1.200 3.600 1.200 6.600c0 1.800 1.200 3.300 3 4.300-.1 1.300-.6 2.500-1.300 3.400 1.700-.3 3.100-1.200 4-2.400.7.100 1.400.200 2.100.200 4.400 0 7.800-2.400 7.800-5.500S13.400 1.200 9 1.200z" fill="none" stroke="#5a5a5a" stroke-width="1.100"/></svg>
    <svg class="a" style="left:1247px;top:9px" width="9" height="9" viewBox="0 0 9 9"><path d="M1.200 1.200l6.600 6.600M7.800 1.200l-6.600 6.600" stroke="#444" stroke-width="2.100"/></svg>
  </div>
  <div class="a" id="mtool">
    <span class="t" style="left:5px">Ações</span><i class="mar" style="left:41px"></i>
    <span class="t" style="left:60px">Consultar</span><i class="mar" style="left:117px"></i><i class="msep" style="left:130px"></i>
    <span class="t" style="left:135px">Consultar insumo</span><i class="mar" style="left:234px"></i><i class="msep" style="left:246px"></i>
    <span class="t" style="left:252px;letter-spacing:0">Imprimir/exportar</span><i class="mar" style="left:356px"></i>
    <svg class="a" style="left:370px;top:2.500px" width="16.500" height="16.500" viewBox="0 0 16 16"><circle cx="8" cy="8" r="7.600" fill="#2a55a8"/><circle cx="8" cy="8" r="6.300" fill="#4a86e0"/><path d="M2.500 6.500a5.600 5.600 0 0 1 11 0a9 5 0 0 0-11 0z" fill="#8fb8f4" opacity=".7"/><text x="8" y="12" text-anchor="middle" font-family="Liberation Sans, sans-serif" font-weight="700" font-size="11" fill="#fff">?</text></svg>
    <i class="mar" style="left:395.500px"></i><i class="msep" style="left:408px"></i><i class="msep" style="left:368px"></i>
  </div>
  <div class="a" id="mbody"></div>
  <!-- form (coordinates relative to modal) -->
  <div class="inp" style="left:100px;top:61px;width:158px;height:20px"></div>
  <div class="inp" style="left:100px;top:113px;width:158px;height:20px"></div><svg class="a" style="left:264px;top:117.500px" width="12" height="12" viewBox="0 0 12 12"><circle cx="4.500" cy="4.500" r="3.500" fill="#fdfdfd" stroke="#555" stroke-width="1.100"/><path d="M7.200 7.200l3.500 3.500" stroke="#333" stroke-width="1.900" stroke-linecap="round"/></svg>
  <span class="t" style="left:284px;top:118.500px;color:#3a3a3a;letter-spacing:-0.150px">Chapa de MDP - 3 camadas 4 x 2</span>
  <div class="inp r" style="left:130px;top:137px;width:83px;height:20px;line-height:18px;padding-right:2px;color:#222">10,00000</div>
  <span class="t" style="left:219px;top:139.500px;color:#333">un</span>
  <i class="chk" style="left:246px;top:141px"><svg width="10" height="9" viewBox="0 0 10 9"><path d="M1.300 4.600l2.700 2.600L8.700 1.400" fill="none" stroke="#fff" stroke-width="1.800" stroke-linecap="round" stroke-linejoin="round"/></svg></i><span class="t" style="left:261.500px;top:143px;color:#000">Fixar</span>
  <div class="inp" style="left:100px;top:162px;width:81px"></div>
  <i class="chk" style="left:203px;top:165px"><svg width="10" height="9" viewBox="0 0 10 9"><path d="M1.300 4.600l2.700 2.600L8.700 1.400" fill="none" stroke="#fff" stroke-width="1.800" stroke-linecap="round" stroke-linejoin="round"/></svg></i><span class="t" style="left:218.500px;top:167px;color:#000">Fixar</span>
  <div class="btn" style="left:9px;top:239px;width:75px;height:29px;line-height:28px">Imprimir</div>
  <span class="t" style="left:877px;top:71px;color:#000">Estado</span>
  <div class="inp" style="left:992px;top:65px;width:114px;height:20px;line-height:19px;padding-left:2px;color:#555">A produzir</div>
  <div class="btn" style="left:1120px;top:59px;width:71px;height:28px;line-height:27px">Concluir</div>
  <span class="t" style="left:877px;top:95px;color:#000">Estado configurável</span>
  <div class="a" style="left:992px;top:89.500px;width:110px;height:19.500px;border:1px solid #555;border-radius:2.500px;background:#fff"><svg class="a" style="right:3px;top:5px" width="10" height="7" viewBox="0 0 10 7"><path d="M1 1l4 4 4-4" fill="none" stroke="#111" stroke-width="2"/></svg></div>
  <!-- Ocultar insumos -->
  <svg class="a" style="left:10.500px;top:291px" width="7" height="7" viewBox="0 0 7 7"><path d="M6.700 0v6.700H0z" fill="#2e2e2e"/></svg>
  <span class="t" style="left:22px;top:287.500px;color:#333">Ocultar insumos</span>
  <svg class="a" style="left:115px;top:289px" width="9" height="11" viewBox="0 0 9 11"><rect x="0.500" y="0.500" width="8" height="10" fill="#fff" stroke="#555"/><path d="M2 3h5M2 5.500h5M2 8h5" stroke="#555" stroke-width="0.900"/></svg>
  <div class="a" id="grid">
    <div class="a" id="gtool">
      <div class="a" style="left:8px;top:1.500px;width:56px;height:23px;border-radius:3.500px;background:#7cb90a;color:#fff;font-weight:700;font-size:13px;line-height:22px;text-align:center;letter-spacing:0">Novo</div>
      <i class="ts" style="left:72px"></i><i class="ts" style="left:102px"></i><i class="ts" style="left:132px"></i>
      <svg class="a" style="left:80.500px;top:7px" width="15" height="12" viewBox="0 0 15 12"><path d="M7 2.200C4.600 1.300 3 2.600 3.100 5.500" fill="none" stroke="#111" stroke-width="2"/><path d="M0 5.200h6.200L3.100 9.300z" fill="#111"/><path d="M8 9.800c2.400.900 4-.400 3.900-3.300" fill="none" stroke="#111" stroke-width="2"/><path d="M15 6.800H8.800l3.100-4.100z" fill="#111"/></svg>
      <svg class="a" style="left:108.500px;top:4px" width="17" height="17" viewBox="0 0 16 16"><circle cx="8" cy="8" r="7.600" fill="#2a55a8"/><circle cx="8" cy="8" r="6.300" fill="#4a86e0"/><path d="M2.500 6.500a5.600 5.600 0 0 1 11 0a9 5 0 0 0-11 0z" fill="#8fb8f4" opacity=".7"/><text x="8" y="12" text-anchor="middle" font-family="Liberation Sans, sans-serif" font-weight="700" font-size="11" fill="#fff">?</text></svg>
      <svg class="a" style="left:138px;top:8.500px" width="8" height="9" viewBox="0 0 8 9"><path d="M1 0.500v8" stroke="#aaa" stroke-width="1.400"/><path d="M7.500 0.500v8L2.500 4.500z" fill="#aaa"/></svg>
      <svg class="a" style="left:160px;top:8.500px" width="5" height="9" viewBox="0 0 5 9"><path d="M4.500 0.500v8L0 4.500z" fill="#aaa"/></svg>
      <div class="a" style="left:179.500px;top:2px;width:16px;height:23px;border:1px solid #c8ccd0;border-radius:4px;background:#fff;text-align:center;line-height:22px;color:#333">1</div>
      <div class="a" style="left:203px;top:2px;width:50px;height:19px;border:1px solid #b0b4ba;background:#dddfe2;line-height:16px;padding-left:5px;color:#444;letter-spacing:0">200<i class="a" style="left:33px;top:8px;border-left:4.500px solid transparent;border-right:4.500px solid transparent;border-top:4.500px solid #222"></i></div>
      <svg class="a" style="left:259.500px;top:8.500px" width="5" height="9" viewBox="0 0 5 9"><path d="M0.500 0.500v8L5 4.500z" fill="#aaa"/></svg>
      <svg class="a" style="left:278px;top:8.500px" width="8" height="9" viewBox="0 0 8 9"><path d="M7 0.500v8" stroke="#aaa" stroke-width="1.400"/><path d="M0.500 0.500v8L5.500 4.500z" fill="#aaa"/></svg>
      <span class="t r" style="right:9px;top:5.500px;color:#333;letter-spacing:-0.080px">Exibindo itens 1 - 2 de 2</span>
    </div>
    <div class="a" id="ghead"><i class="vs" style="left:38px"></i><i class="vs" style="left:78px"></i><i class="vs" style="left:188px"></i><i class="vs" style="left:388px"></i><i class="vs" style="left:535px"></i><i class="vs" style="left:639px"></i><i class="vs" style="left:709px"></i><i class="vs" style="left:749px"></i><i class="vs" style="left:899.500px"></i><i class="vs" style="left:1049.500px"></i><i class="vs" style="left:1139.500px"></i><i class="vs" style="left:1217px"></i>
      <i class="chk" style="left:14px;top:5.500px"><svg width="10" height="9" viewBox="0 0 10 9"><path d="M1.300 4.600l2.700 2.600L8.700 1.400" fill="none" stroke="#fff" stroke-width="1.800" stroke-linecap="round" stroke-linejoin="round"/></svg></i>
      <span class="t" style="left:45px">Oper</span><span class="t" style="left:85px">Código</span><span class="t" style="left:195px">Descrição</span><span class="t" style="left:395px;letter-spacing:-0.280px">Qt sem índice de perdas</span><span class="t" style="left:542px">Índice de perdas</span><span class="t" style="left:646px">Qt total</span><span class="t" style="left:716px">Un</span><span class="t" style="left:757px">Qt baixada</span><span class="t" style="left:907px">Qt a baixar</span><span class="t" style="left:1056px">Lote interno</span><span class="t" style="left:1146px;width:71px;overflow:hidden">Lote do fabricante</span>
    </div>
    <div class="gr" style="top:54px;height:23px;background:#f5b719;color:#111"><i class="vs" style="left:38px"></i><i class="vs" style="left:78px"></i><i class="vs" style="left:188px"></i><i class="vs" style="left:388px"></i><i class="vs" style="left:535px"></i><i class="vs" style="left:639px"></i><i class="vs" style="left:709px"></i><i class="vs" style="left:749px"></i><i class="vs" style="left:899.500px"></i><i class="vs" style="left:1049.500px"></i><i class="vs" style="left:1139.500px"></i>
<i class="chk" style="left:11px;top:5px"><svg width="10" height="9" viewBox="0 0 10 9"><path d="M1.300 4.600l2.700 2.600L8.700 1.400" fill="none" stroke="#fff" stroke-width="1.800" stroke-linecap="round" stroke-linejoin="round"/></svg></i>
<span class="t r" style="right:1144px">10</span><span class="t" style="left:85px">00035</span><span class="t" style="left:195px">Perfil de MDP</span>
<span class="t r" style="right:689px">10,00000</span><span class="t r" style="right:585px">0%</span><span class="t r" style="right:515px">10,00</span><span class="t" style="left:716px">un</span><span class="t r" style="right:325px">0,00</span>
<div class="a r" style="left:908px;top:2.500px;width:94px;height:17.500px;background:#fff;border:1px solid #c8c8c8;color:#111;line-height:16px;padding-right:2px">10,00000</div><svg class="a" style="left:1007px;top:4px;opacity:0.85" width="13" height="15" viewBox="0 0 13 15"><path d="M4.300 0.500h4.400v6.500h3.500L6.500 13.500.800 7h3.500z" fill="#c8c030" stroke="#b0a820" stroke-width="0.700"/><ellipse cx="6.500" cy="14.200" rx="4.500" ry="0.700" fill="#000" opacity=".15"/></svg><svg class="a" style="left:1025px;top:5px" width="14" height="13" viewBox="0 0 14 13"><path d="M1.200 7.300l3.600 3.900L12.800 1.200" fill="none" stroke="#f9e19a" stroke-width="1.700"/></svg>
<span class="t" style="left:1085px">Múltiplos</span><span class="t" style="left:1195px">Múlt</span></div>
    <div class="gr" style="top:78px;height:22px;box-shadow:0 -1px 0 #f3f4f5;background:#f3f4f5;color:#333"><i class="vs" style="left:38px"></i><i class="vs" style="left:78px"></i><i class="vs" style="left:188px"></i><i class="vs" style="left:388px"></i><i class="vs" style="left:535px"></i><i class="vs" style="left:639px"></i><i class="vs" style="left:709px"></i><i class="vs" style="left:749px"></i><i class="vs" style="left:899.500px"></i><i class="vs" style="left:1049.500px"></i><i class="vs" style="left:1139.500px"></i>
<i class="chk" style="left:11px;top:5px"><svg width="10" height="9" viewBox="0 0 10 9"><path d="M1.300 4.600l2.700 2.600L8.700 1.400" fill="none" stroke="#fff" stroke-width="1.800" stroke-linecap="round" stroke-linejoin="round"/></svg></i>
<span class="t r" style="right:1144px">20</span><span class="t" style="left:85px">00054</span><span class="t" style="left:195px">Ripas de MDP</span>
<span class="t r" style="right:689px">10,00000</span><span class="t r" style="right:585px">0%</span><span class="t r" style="right:515px">10,00</span><span class="t" style="left:716px">un</span><span class="t r" style="right:325px">0,00</span>
<div class="a r" style="left:908px;top:2.500px;width:94px;height:17.500px;background:#fff;border:1px solid #c8c8c8;color:#111;line-height:16px;padding-right:2px">10,00000</div><svg class="a" style="left:1007px;top:4px;opacity:1" width="13" height="15" viewBox="0 0 13 15"><path d="M4.300 0.500h4.400v6.500h3.500L6.500 13.500.800 7h3.500z" fill="#6cb424" stroke="#4f9a12" stroke-width="0.700"/><ellipse cx="6.500" cy="14.200" rx="4.500" ry="0.700" fill="#000" opacity=".15"/></svg><svg class="a" style="left:1025px;top:5px" width="14" height="13" viewBox="0 0 14 13"><path d="M1.200 7.300l3.600 3.900L12.800 1.200" fill="none" stroke="#dcdcdc" stroke-width="1.700"/></svg></div>
    <!-- scrollbars -->
    <div class="a" style="left:1217px;top:53px;width:15px;height:47px;background:#fafafa"></div>
    <i class="a" style="left:1220px;top:59px;border-left:4.500px solid transparent;border-right:4.500px solid transparent;border-bottom:7px solid #8a8a8a"></i>
    <i class="a" style="left:1220px;top:89px;border-left:4.500px solid transparent;border-right:4.500px solid transparent;border-top:7px solid #8a8a8a"></i>
    <i class="a" style="left:5px;top:102.500px;border-top:4.500px solid transparent;border-bottom:4.500px solid transparent;border-right:7px solid #6a6a6a"></i>
    <div class="a" style="left:17px;top:103px;width:875px;height:9px;border-radius:4.500px;background:#8c8c8c"></div>
    <i class="a" style="left:1206px;top:102.500px;border-top:4.500px solid transparent;border-bottom:4.500px solid transparent;border-left:7px solid #8a8a8a"></i>
  </div>
  <svg class="a" style="left:11.500px;top:438.5px" width="6" height="9" viewBox="0 0 6 9"><path d="M0.500 0.300v8.400L5.500 4.500z" fill="#2a2a2a"/></svg><span class="t" style="left:22px;top:437px;color:#404040">Reservas e vínculos</span>
  <svg class="a" style="left:11.500px;top:457.5px" width="6" height="9" viewBox="0 0 6 9"><path d="M0.500 0.300v8.400L5.500 4.500z" fill="#2a2a2a"/></svg><span class="t" style="left:22px;top:456px;color:#404040">Aparas</span>
  <svg class="a" style="left:11.500px;top:476.5px" width="6" height="9" viewBox="0 0 6 9"><path d="M0.500 0.300v8.400L5.500 4.500z" fill="#2a2a2a"/></svg><span class="t" style="left:22px;top:475px;color:#404040">Retiradas de materiais</span>
  <svg class="a" style="left:11.500px;top:495.5px" width="6" height="9" viewBox="0 0 6 9"><path d="M0.500 0.300v8.400L5.500 4.500z" fill="#2a2a2a"/></svg><span class="t" style="left:22px;top:494px;color:#404040">Conclusões da OP</span>
  <svg class="a" style="left:11.500px;top:514.5px" width="6" height="9" viewBox="0 0 6 9"><path d="M0.500 0.300v8.400L5.500 4.500z" fill="#2a2a2a"/></svg><span class="t" style="left:22px;top:513px;color:#404040">Anexos</span>
  <svg class="a" style="left:11.500px;top:533.5px" width="6" height="9" viewBox="0 0 6 9"><path d="M0.500 0.300v8.400L5.500 4.500z" fill="#2a2a2a"/></svg><span class="t" style="left:22px;top:532px;color:#404040">Anotações</span>
  <!-- dropdown -->
  <div class="a" style="left:2.400px;top:30.200px;width:56.400px;height:19.400px;border:2.800px solid #f80000;border-radius:3px"></div>
  <div class="a" id="menu">
    <div class="a" style="left:-1.900px;top:-1.700px;width:177px;height:23.300px;background:#fbe083;border:2.900px solid #f80000;border-radius:1.500px"></div>
    <span class="t" style="top:4px;color:#222">Baixar insumos selecionados</span>
    <span class="t" style="top:23px">Estornar baixas</span>
    <span class="t" style="top:42px">Estornar baixas selecionadas</span>
    <span class="t" style="top:61px">Desconcluir baixa</span>
    <span class="t" style="top:80px">Forçar conclusão da baixa</span>
    <hr style="top:96.300px">
    <span class="t" style="top:103px">Nova baixa</span>
    <span class="t" style="top:122px">Apontar MO consumida na OP</span>
    <span class="t" style="top:141px">Retirar apara da OP</span>
    <span class="t" style="top:160px">Retirar material da OP</span>
    <hr style="top:176.300px"><hr style="top:180.300px">
    <span class="t" style="top:187px">Atualizar roteiro</span>
  </div>
  <span class="t r" style="right:4px;top:556px;color:#333;letter-spacing:-0.080px">Criado em 23/07/2025 15:13:58 por Samuel Gonçalves.</span>
</div>
</body>
</html>
